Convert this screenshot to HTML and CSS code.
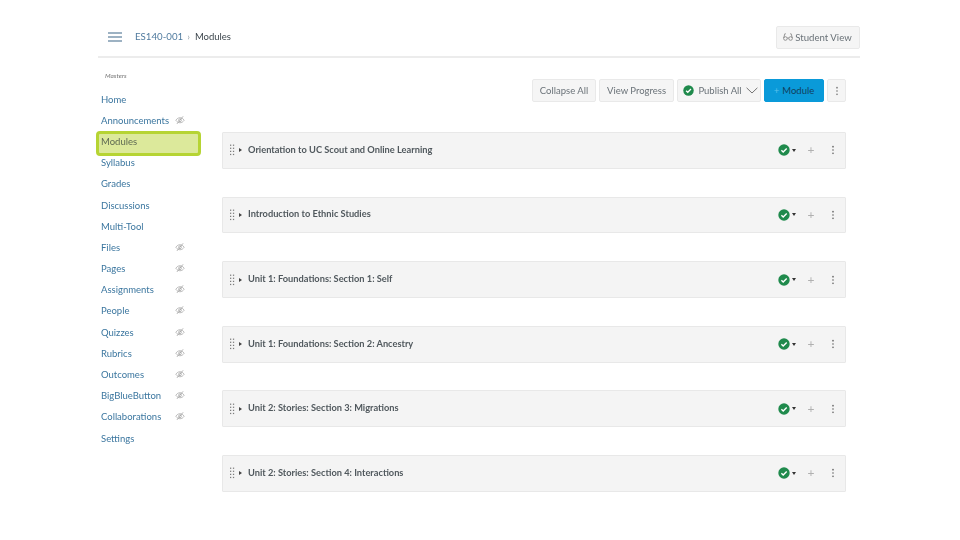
FILE: index.html
```html
<!DOCTYPE html>
<html lang="en">
<head>
<meta charset="utf-8">
<title>Modules</title>
<link rel="stylesheet" href="styles.css">
</head>
<body>
<svg class="defs" width="0" height="0" aria-hidden="true">
  <symbol id="eye" viewBox="0 0 12 12"><path d="M1 6.300c1.500-2.100 3-3 5-3s3.500.9 5 3c-1.500 2.100-3 3-5 3s-3.500-.9-5-3z" fill="none" stroke="currentColor" stroke-width=".8"/><circle cx="6" cy="6.300" r="1.700" fill="none" stroke="currentColor" stroke-width=".8"/><path d="M2.200 10.800 9.800 1.500" stroke="currentColor" stroke-width=".8"/></symbol>
  <symbol id="check" viewBox="0 0 12 12"><circle cx="6" cy="6" r="5.700" fill="#1f8a4c"/><path d="M3.400 6.200 5.200 7.900 8.700 4.400" fill="none" stroke="#fff" stroke-width="1.400"/></symbol>
  <symbol id="kebab" viewBox="0 0 4 12"><circle cx="2" cy="2" r="1" fill="currentColor"/><circle cx="2" cy="6" r="1" fill="currentColor"/><circle cx="2" cy="10" r="1" fill="currentColor"/></symbol>
  <symbol id="grip" viewBox="0 0 6 13"><g fill="#7c7c7c"><rect x="0" y="0" width="1.500" height="1.500"/><rect x="3.500" y="0" width="1.500" height="1.500"/><rect x="0" y="3.700" width="1.500" height="1.500"/><rect x="3.500" y="3.700" width="1.500" height="1.500"/><rect x="0" y="7.400" width="1.500" height="1.500"/><rect x="3.500" y="7.400" width="1.500" height="1.500"/><rect x="0" y="11.100" width="1.500" height="1.500"/><rect x="3.500" y="11.100" width="1.500" height="1.500"/></g></symbol>
</svg>
<div class="page">
  <header class="topbar">
    <svg class="burger" width="14" height="10" viewBox="0 0 14 10" aria-hidden="true"><path d="M0 1h14M0 5h14M0 9h14" stroke="#7d99b0" stroke-width="1.300"/></svg>
    <nav class="crumbs"><a class="crumb-link">ES140-001</a><span class="crumb-sep">›</span><span class="crumb-here">Modules</span></nav>
    <button class="btn student"><svg class="glasses" width="10" height="8" viewBox="0 0 10 8" aria-hidden="true"><path d="M.6 5.500a1.800 1.800 0 1 0 3.600 0 1.800 1.800 0 1 0-3.600 0zM5.800 5.500a1.800 1.800 0 1 0 3.600 0 1.800 1.800 0 1 0-3.600 0zM4.200 5h1.600M.7 5 1.800 .8h1M9.300 5 8.200 .8h-1" fill="none" stroke="#7f7f7f" stroke-width=".8"/></svg>Student View</button>
  </header>
  <div class="main">
    <aside class="side">
      <div class="term">Masters</div>
      <ul class="nav">
        <li class="nav-item"><a>Home</a></li>
        <li class="nav-item"><a>Announcements</a><svg class="eye"><use href="#eye"/></svg></li>
        <li class="nav-item active"><a>Modules</a></li>
        <li class="nav-item"><a>Syllabus</a></li>
        <li class="nav-item"><a>Grades</a></li>
        <li class="nav-item"><a>Discussions</a></li>
        <li class="nav-item"><a>Multi-Tool</a></li>
        <li class="nav-item"><a>Files</a><svg class="eye"><use href="#eye"/></svg></li>
        <li class="nav-item"><a>Pages</a><svg class="eye"><use href="#eye"/></svg></li>
        <li class="nav-item"><a>Assignments</a><svg class="eye"><use href="#eye"/></svg></li>
        <li class="nav-item"><a>People</a><svg class="eye"><use href="#eye"/></svg></li>
        <li class="nav-item"><a>Quizzes</a><svg class="eye"><use href="#eye"/></svg></li>
        <li class="nav-item"><a>Rubrics</a><svg class="eye"><use href="#eye"/></svg></li>
        <li class="nav-item"><a>Outcomes</a><svg class="eye"><use href="#eye"/></svg></li>
        <li class="nav-item"><a>BigBlueButton</a><svg class="eye"><use href="#eye"/></svg></li>
        <li class="nav-item"><a>Collaborations</a><svg class="eye"><use href="#eye"/></svg></li>
        <li class="nav-item"><a>Settings</a></li>
      </ul>
    </aside>
    <section class="content">
      <div class="toolbar">
        <button class="btn">Collapse All</button>
        <button class="btn">View Progress</button>
        <button class="btn publish"><svg class="pub-check"><use href="#check"/></svg>Publish All<svg class="chev" width="12" height="7" viewBox="0 0 12 7" aria-hidden="true"><path d="M.6.8 6 6 11.400.8" fill="none" stroke="#666" stroke-width=".9"/></svg></button>
        <button class="btn primary"><span class="plus">+</span> Module</button>
        <button class="btn more"><svg class="kebab"><use href="#kebab"/></svg></button>
      </div>
      <div class="modules">
        <article class="module"><svg class="grip"><use href="#grip"/></svg><span class="tri"></span><h2 class="title">Orientation to UC Scout and Online Learning</h2><svg class="mod-check"><use href="#check"/></svg><span class="caret"></span><span class="add">+</span><svg class="kebab"><use href="#kebab"/></svg></article>
        <article class="module"><svg class="grip"><use href="#grip"/></svg><span class="tri"></span><h2 class="title">Introduction to Ethnic Studies</h2><svg class="mod-check"><use href="#check"/></svg><span class="caret"></span><span class="add">+</span><svg class="kebab"><use href="#kebab"/></svg></article>
        <article class="module"><svg class="grip"><use href="#grip"/></svg><span class="tri"></span><h2 class="title">Unit 1: Foundations: Section 1: Self</h2><svg class="mod-check"><use href="#check"/></svg><span class="caret"></span><span class="add">+</span><svg class="kebab"><use href="#kebab"/></svg></article>
        <article class="module"><svg class="grip"><use href="#grip"/></svg><span class="tri"></span><h2 class="title">Unit 1: Foundations: Section 2: Ancestry</h2><svg class="mod-check"><use href="#check"/></svg><span class="caret"></span><span class="add">+</span><svg class="kebab"><use href="#kebab"/></svg></article>
        <article class="module"><svg class="grip"><use href="#grip"/></svg><span class="tri"></span><h2 class="title">Unit 2: Stories: Section 3: Migrations</h2><svg class="mod-check"><use href="#check"/></svg><span class="caret"></span><span class="add">+</span><svg class="kebab"><use href="#kebab"/></svg></article>
        <article class="module"><svg class="grip"><use href="#grip"/></svg><span class="tri"></span><h2 class="title">Unit 2: Stories: Section 4: Interactions</h2><svg class="mod-check"><use href="#check"/></svg><span class="caret"></span><span class="add">+</span><svg class="kebab"><use href="#kebab"/></svg></article>
      </div>
    </section>
  </div>
</div>
</body>
</html>
```

FILE: styles.css
```css
* { box-sizing: border-box; }
html, body { margin: 0; padding: 0; }
body { background: #fff; font-family: Lato, "Liberation Sans", sans-serif; color: #3d464d; }
.defs { position: absolute; }
.page { width: 762px; margin-left: 98px; filter: blur(.35px); }

.topbar { display: flex; align-items: center; height: 58px; padding: 26px 0 8px 10px; border-bottom: 2px solid #ececec; }
.burger { margin-right: 13px; flex: none; }
.crumbs { display: flex; align-items: center; font-size: 9.700px; flex: 1; padding-bottom: 2px; }
.crumb-link { color: #4f7a9e; }
.crumb-sep { color: #9aa5ad; margin: 0 5px 0 4px; }
.crumb-here { color: #3d464d; font-size: 9.500px; }

.btn { display: inline-flex; align-items: center; justify-content: center; height: 23px; padding: 0; font: inherit; font-size: 9.500px; color: #6a7278; background: #f5f5f5; border: 1px solid #e9e9e9; border-radius: 2px; }
.student { width: 84px; height: 23px; font-size: 9.600px; padding-right: 1px; }
.glasses { margin-right: 2px; }

.main { display: flex; }
.side { width: 124px; flex: none; padding-top: 14px; }
.term { font-size: 6.500px; font-style: italic; color: #777; height: 8px; line-height: 8px; margin: 0 0 0 7px; }
.nav { list-style: none; width: 98px; margin: 8.500px 0 0 3px; padding: 0; }
.nav-item { display: flex; align-items: center; height: 21.200px; font-size: 9.500px; color: #3b769f; position: relative; }
.nav-item a { color: inherit; }
.eye { width: 10px; height: 10px; color: #9a9a9a; position: absolute; left: 74px; top: 5px; }
.active { color: #5f6a52; }
.active::before { content: ""; position: absolute; z-index: -1; left: -3px; right: 0; top: 2.200px; bottom: -2.200px; background: #dce99b; outline: 3px solid #b6d433; outline-offset: -1px; border-radius: 2px; }

.content { flex: 1; padding: 21px 14px 0 0; }
.toolbar { display: flex; justify-content: flex-end; gap: 3px; }
.toolbar .btn:nth-child(1) { width: 64px; }
.toolbar .btn:nth-child(2) { width: 75px; }
.publish { width: 84px; gap: 4px; padding-left: 3px; }
.pub-check { width: 11px; height: 11px; }
.primary { width: 60px; background: #0a9ad9; border-color: #0a9ad9; color: #123f5e; gap: 3px; }
.plus { color: #5cc0ea; }
.more { width: 19px; color: #777; }
.kebab { width: 4px; height: 10px; }

.modules { display: flex; flex-direction: column; gap: 27.800px; margin-top: 30px; }
.module { display: flex; align-items: center; height: 36.800px; padding: 0 10px 0 7px; background: #f4f4f4; border: 1px solid #e8e8e8; border-radius: 1px; }
.grip { width: 5px; height: 12px; margin-right: 4px; }
.tri { width: 0; height: 0; border-left: 3px solid #444; border-top: 2px solid transparent; border-bottom: 2px solid transparent; margin-right: 6px; }
.title { flex: 1; margin: 0 0 2px; font-size: 9.250px; font-weight: 700; color: #50585d; }
.mod-check { width: 12px; height: 12px; }
.caret { width: 0; height: 0; border-top: 3px solid #333; border-left: 2px solid transparent; border-right: 2px solid transparent; margin: 0 11px 0 2px; }
.add { color: #b0b0b0; font-size: 12px; line-height: 1; width: 8px; text-align: center; margin-right: 16px; }
.module .kebab { color: #666; }
```
